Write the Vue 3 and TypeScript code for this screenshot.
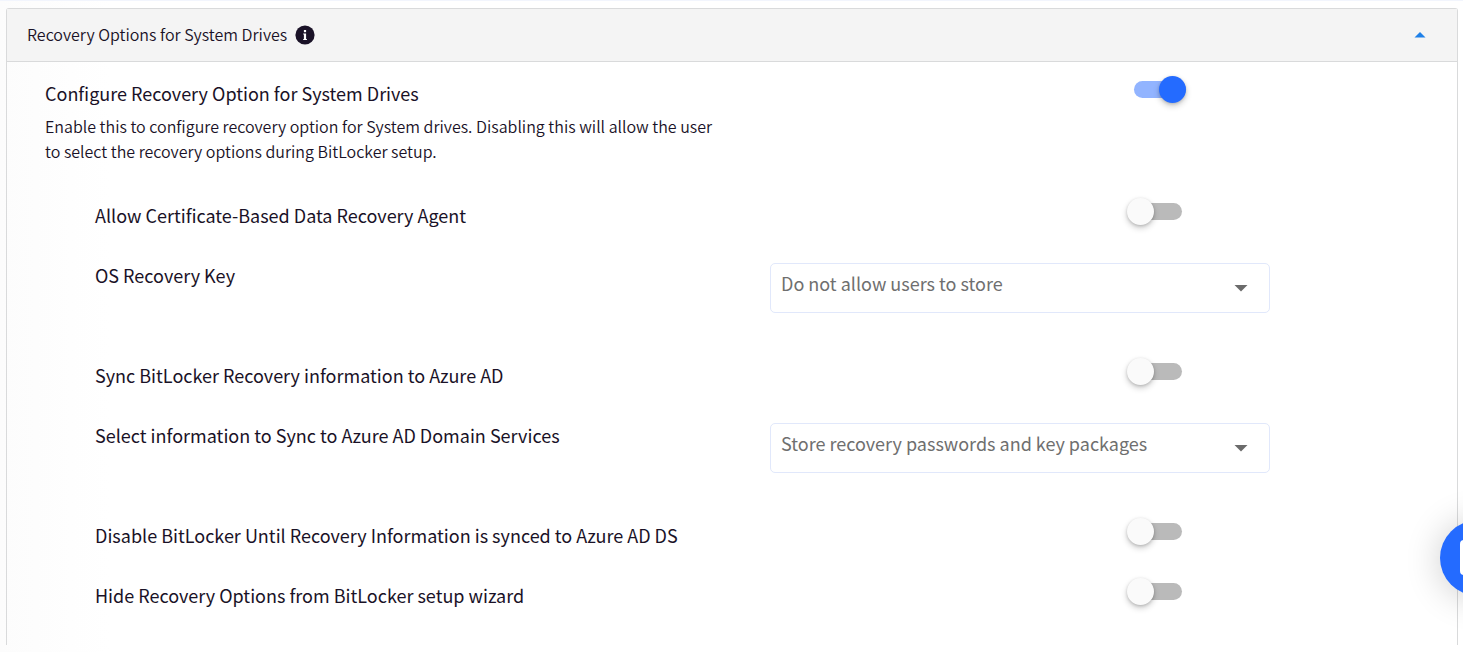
<script setup lang="ts">
import { ref } from 'vue'

interface ToggleSetting {
  id: string
  kind: 'toggle'
  label: string
  value: boolean
}

interface SelectSetting {
  id: string
  kind: 'select'
  label: string
  value: string
  options: string[]
}

const expanded = ref(true)
const recoveryEnabled = ref(true)

const settings = ref<(ToggleSetting | SelectSetting)[]>([
  { id: 'cert-agent', kind: 'toggle', label: 'Allow Certificate-Based Data Recovery Agent', value: false },
  {
    id: 'os-key',
    kind: 'select',
    label: 'OS Recovery Key',
    value: 'Do not allow users to store',
    options: ['Do not allow users to store'],
  },
  { id: 'sync-azure', kind: 'toggle', label: 'Sync BitLocker Recovery information to Azure AD', value: false },
  {
    id: 'sync-info',
    kind: 'select',
    label: 'Select information to Sync to Azure AD Domain Services',
    value: 'Store recovery passwords and key packages',
    options: ['Store recovery passwords and key packages'],
  },
  { id: 'disable-until', kind: 'toggle', label: 'Disable BitLocker Until Recovery Information is synced to Azure AD DS', value: false },
  { id: 'hide-options', kind: 'toggle', label: 'Hide Recovery Options from BitLocker setup wizard', value: false },
])
</script>

<template>
  <main class="page">
    <section class="panel">
      <header class="panel-header">
        <h2 class="panel-title">Recovery Options for System Drives</h2>
        <svg class="info" viewBox="0 0 20 20" aria-hidden="true">
          <circle cx="10" cy="10" r="9.6" fill="#1a1227" />
          <rect x="8.9" y="5" width="2.200" height="2.200" fill="#fff" />
          <path d="M8.2 8.400h2.900v5.600h.8v1H8.200v-1h.7V9.400h-.7z" fill="#fff" />
        </svg>
        <button class="collapse" type="button" aria-label="Toggle section" :aria-expanded="expanded" @click="expanded = !expanded">
          <svg viewBox="0 0 12 6" aria-hidden="true"><path d="M0.5 5.5L6 0l5.500 5.500z" fill="#1e80e8" /></svg>
        </button>
      </header>

      <div v-if="expanded" class="panel-body">
        <div class="row main-row">
          <div>
            <label class="label" for="configure">Configure Recovery Option for System Drives</label>
            <p class="description">
              Enable this to configure recovery option for System drives. Disabling this will allow the user to select the recovery options during BitLocker setup.
            </p>
          </div>
          <div class="control">
            <input id="configure" v-model="recoveryEnabled" class="toggle" type="checkbox" role="switch" />
          </div>
        </div>

        <div class="nested">
          <div v-for="item in settings" :key="item.id" class="row" :class="item.kind + '-row'">
            <label class="label" :for="item.id">{{ item.label }}</label>
            <div class="control">
              <input v-if="item.kind === 'toggle'" :id="item.id" v-model="item.value" class="toggle" type="checkbox" role="switch" />
              <div v-else class="select-box">
                <select :id="item.id" v-model="item.value" class="select">
                  <option v-for="option in item.options" :key="option">{{ option }}</option>
                </select>
                <svg class="arrow" viewBox="0 0 14 7" aria-hidden="true"><path d="M0.5 0h13L7 6.500z" fill="#6b6b6b" /></svg>
              </div>
            </div>
          </div>
        </div>
      </div>
    </section>

    <button class="chat" type="button" aria-label="Open chat">
      <svg viewBox="0 0 36 36" aria-hidden="true">
        <path d="M4 0h28a4 4 0 0 1 4 4v32l-7-1H4a4 4 0 0 1-4-4V4a4 4 0 0 1 4-4z" fill="#fff" />
      </svg>
    </button>
  </main>
</template>

<style>
body {
  margin: 0;
  background: #fff;
}
</style>

<style scoped>
.page {
  box-sizing: border-box;
  min-height: 100vh;
  padding: 7px 5px 0 6px;
  border-top: 1px solid #f2f5fd;
  color: #1a1227;
  font-family: "Noto Sans CJK SC", "Noto Sans", sans-serif;
  background: linear-gradient(to right, #fcfcfc, #fff 110px);
}

.panel {
  border: 1px solid #d9dadb;
  border-bottom: 0;
  border-radius: 3px 3px 0 0;
}

.panel-header {
  display: flex;
  align-items: center;
  gap: 8px;
  height: 52px;
  padding: 0 30px 0 20px;
  border-bottom: 1px solid #d9dadb;
  background: #f4f4f4;
}

.panel-title {
  margin: 0;
  padding-bottom: 3px;
  font-size: 16px;
  font-weight: 350;
  line-height: 24px;
}

.info {
  width: 20px;
  height: 20px;
}

.collapse {
  display: flex;
  margin-left: auto;
  padding: 0;
  border: 0;
  background: none;
}

.collapse svg {
  width: 14px;
  height: 6px;
}

.panel-body {
  padding: 13px 0 8px 38px;
}

.row {
  display: grid;
  grid-template-columns: 675fr 500fr 187fr;
}

.main-row {
  grid-template-columns: 729fr 500fr 183fr;
}

.nested {
  padding: 33px 0 0 50px;
}

.toggle-row {
  min-height: 60px;
}

.select-row {
  min-height: 100px;
}

.label {
  display: block;
  font-size: 18px;
  line-height: 36px;
}

.description {
  max-width: 680px;
  margin: 3px 0 0;
  font-size: 16px;
  font-weight: 350;
  line-height: 25px;
}

.toggle {
  position: relative;
  display: block;
  width: 52px;
  height: 27px;
  margin: 1px 0 0 72%;
  appearance: none;
  cursor: pointer;
}

.toggle::before {
  content: "";
  position: absolute;
  inset: 5px 0;
  border-radius: 9px;
  background: #bababa;
}

.toggle::after {
  content: "";
  position: absolute;
  top: 0;
  left: -3px;
  width: 27px;
  height: 27px;
  border-radius: 50%;
  background: #fafafa;
  box-shadow: 0 3px 6px rgba(0, 0, 0, 0.2), 0 1px 3px rgba(0, 0, 0, 0.16);
}

.toggle:checked::before {
  background: #92b4ff;
}

.toggle:checked::after {
  left: 25px;
  background: #246bff;
}

.select-box {
  position: relative;
  margin-top: 6px;
}

.select {
  display: block;
  width: 100%;
  height: 50px;
  padding: 0 40px 10px 10px;
  border: 1px solid #e1e8fb;
  border-radius: 5px;
  appearance: none;
  background: #fff;
  color: #6f6f6f;
  font: inherit;
  font-size: 18px;
}

.arrow {
  position: absolute;
  top: 22px;
  right: 22px;
  width: 14px;
  height: 7px;
  pointer-events: none;
}

.chat {
  position: fixed;
  right: -53px;
  bottom: 56px;
  display: flex;
  align-items: center;
  justify-content: center;
  width: 76px;
  height: 76px;
  padding: 0;
  border: 0;
  border-radius: 50%;
  background: #246bff;
  box-shadow: 0 2px 36px rgba(0, 0, 0, 0.2);
}

.chat svg {
  width: 36px;
  height: 36px;
}
</style>
